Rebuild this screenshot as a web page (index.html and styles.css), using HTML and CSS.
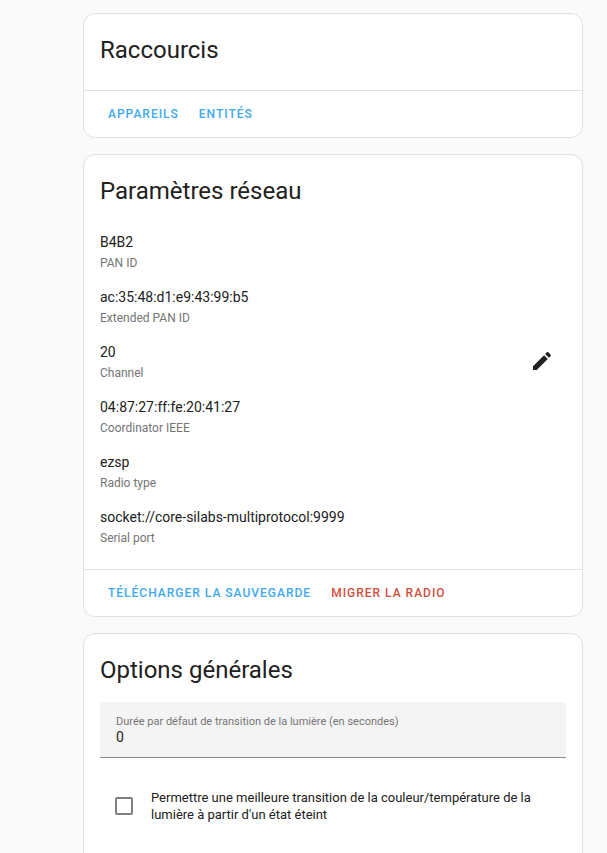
FILE: index.html
```html
<!DOCTYPE html>
<html lang="fr">
<head>
  <meta charset="utf-8">
  <meta name="viewport" content="width=device-width, initial-scale=1">
  <title>Zigbee</title>
  <link rel="stylesheet" href="styles.css">
</head>
<body>
  <main class="page">
    <section class="card">
      <h1 class="card-header">Raccourcis</h1>
      <div class="card-actions">
        <a class="action" href="#appareils">Appareils</a>
        <a class="action" href="#entites">Entités</a>
      </div>
    </section>

    <section class="card">
      <h1 class="card-header">Paramètres réseau</h1>
      <ul class="settings">
        <li class="setting"><div><div class="value">B4B2</div><div class="name">PAN ID</div></div></li>
        <li class="setting"><div><div class="value">ac:35:48:d1:e9:43:99:b5</div><div class="name">Extended PAN ID</div></div></li>
        <li class="setting">
          <div><div class="value">20</div><div class="name">Channel</div></div>
          <button class="icon-button" type="button" aria-label="Channel">
            <svg viewBox="0 0 24 24" width="24" height="24" aria-hidden="true"><path fill="currentColor" d="M20.71,7.04C21.1,6.65 21.1,6 20.71,5.63L18.37,3.29C18,2.9 17.35,2.9 16.96,3.29L15.12,5.12L18.87,8.87M3,17.25V21H6.75L17.81,9.93L14.06,6.18L3,17.25Z"/></svg>
          </button>
        </li>
        <li class="setting"><div><div class="value">04:87:27:ff:fe:20:41:27</div><div class="name">Coordinator IEEE</div></div></li>
        <li class="setting"><div><div class="value">ezsp</div><div class="name">Radio type</div></div></li>
        <li class="setting"><div><div class="value">socket://core-silabs-multiprotocol:9999</div><div class="name">Serial port</div></div></li>
      </ul>
      <div class="card-actions">
        <button class="action" type="button">Télécharger la sauvegarde</button>
        <button class="action warning" type="button">Migrer la radio</button>
      </div>
    </section>

    <section class="card">
      <h1 class="card-header compact">Options générales</h1>
      <form class="options">
        <div class="field">
          <label class="field-label" for="transition">Durée par défaut de transition de la lumière (en secondes)</label>
          <input class="field-input" id="transition" type="text" inputmode="numeric" value="0">
        </div>
        <div class="check-row">
          <input class="checkbox" id="enhanced" type="checkbox">
          <label class="check-label" for="enhanced">Permettre une meilleure transition de la couleur/température de la lumière à partir d'un état éteint</label>
        </div>
      </form>
    </section>
  </main>
</body>
</html>
```
FILE: styles.css
```css
* {
  box-sizing: border-box;
}

html {
  overflow: hidden;
}

body {
  margin: 0;
  background: #fafafa;
  color: #212121;
  font-family: Roboto, "Noto Sans", sans-serif;
  font-size: 14px;
}

.page {
  display: flex;
  flex-direction: column;
  gap: 16px;
  padding: 13px 24px 16px 83px;
}

.card {
  width: 100%;
  max-width: 500px;
  background: #fff;
  border: 1px solid #e0e0e0;
  border-radius: 12px;
}

.card-header {
  margin: 0;
  padding: 12px 16px 16px;
  font-size: 24px;
  font-weight: 400;
  line-height: 48px;
}

.card-header.compact {
  padding-bottom: 8px;
}

.card-actions {
  display: flex;
  gap: 4px;
  padding: 5px 16px;
  border-top: 1px solid #e0e0e0;
}

.action {
  padding: 0 8px;
  border: 0;
  background: none;
  color: #40a9ee;
  font: 500 12px/36px Roboto, sans-serif;
  letter-spacing: 1px;
  text-decoration: none;
  text-transform: uppercase;
  cursor: pointer;
}

.action.warning {
  color: #d1503f;
}

.settings {
  margin: 0;
  padding: 1px 16px 7px;
  list-style: none;
}

.setting {
  display: flex;
  align-items: flex-start;
  justify-content: space-between;
  padding-bottom: 14px;
}

.value {
  line-height: 21px;
}

.name {
  color: #757575;
  font-size: 12px;
  line-height: 20px;
}

.icon-button {
  display: grid;
  place-items: center;
  width: 48px;
  height: 48px;
  margin: -5px 0;
  padding: 0;
  border: 0;
  border-radius: 50%;
  background: none;
  color: #212121;
  cursor: pointer;
}

.options {
  padding: 0 16px 16px;
}

.field {
  display: flex;
  flex-direction: column;
  height: 56px;
  padding: 13px 16px 0;
  background: #f4f4f4;
  border-bottom: 1px solid #8a8a8a;
  border-radius: 4px 4px 0 0;
}

.field-label {
  color: #757575;
  font-size: 11px;
  line-height: 13px;
}

.field-input {
  width: 100%;
  height: 18px;
  padding: 0;
  border: 0;
  outline: 0;
  background: none;
  color: #212121;
  font: 14px/18px Roboto, sans-serif;
}

.check-row {
  display: flex;
  align-items: center;
  gap: 18px;
  padding: 31px 16px 31px 15px;
}

.checkbox {
  flex: none;
  width: 18px;
  height: 18px;
  margin: 0;
  border: 2px solid #808080;
  border-radius: 2px;
  background: #fff;
  appearance: none;
}

.checkbox:checked {
  border-color: #03a9f4;
  background: #03a9f4;
}

.check-label {
  font-size: 13px;
  line-height: 17px;
}
```
